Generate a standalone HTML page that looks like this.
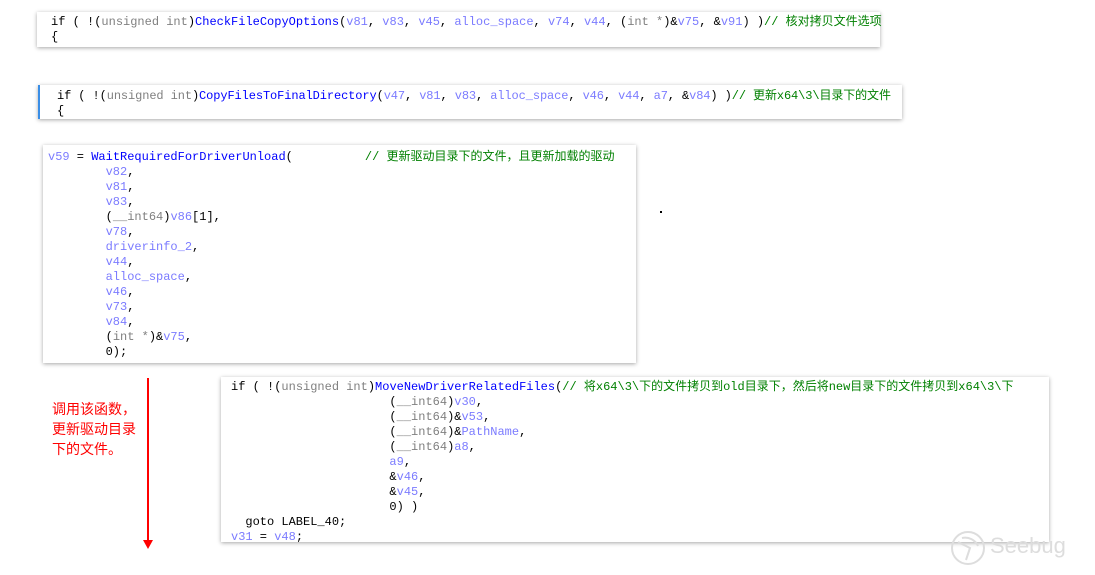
<!DOCTYPE html>
<html><head><meta charset="utf-8"><style>
body{margin:0;width:1095px;height:575px;background:#fff;position:relative;overflow:hidden;font-family:"Liberation Mono","Noto Sans CJK SC",monospace;font-size:12px;}
.box{position:absolute;background:#fff;box-shadow:0 1px 4px rgba(0,0,0,.35);}
.l{position:absolute;white-space:pre;line-height:15px;color:#000;}
.k{color:#000080}.g{color:#808080}.f{color:#0000ff}.v{color:#7b7bff}.c{color:#008000}.b{color:#000}
</style></head><body>
<div class="box" style="left:37px;top:12px;width:843px;height:35px">
<div class="l" style="left:14px;top:3px"><span class="b">if ( !(</span><span class="g">unsigned int</span><span class="b">)</span><span class="f">CheckFileCopyOptions</span><span class="b">(</span><span class="v">v81</span>, <span class="v">v83</span>, <span class="v">v45</span>, <span class="v">alloc_space</span>, <span class="v">v74</span>, <span class="v">v44</span>, (<span class="g">int *</span>)&amp;<span class="v">v75</span>, &amp;<span class="v">v91</span>) )<span class="c">// 核对拷贝文件选项</span></div>
<div class="l" style="left:14px;top:18px;color:#000">{</div>
</div>
<div class="box" style="left:38px;top:85px;width:862px;height:34px;border-left:2px solid #3a8ee6">
<div class="l" style="left:17px;top:4px;letter-spacing:-0.1px"><span class="b">if ( !(</span><span class="g">unsigned int</span><span class="b">)</span><span class="f">CopyFilesToFinalDirectory</span><span class="b">(</span><span class="v">v47</span>, <span class="v">v81</span>, <span class="v">v83</span>, <span class="v">alloc_space</span>, <span class="v">v46</span>, <span class="v">v44</span>, <span class="v">a7</span>, &amp;<span class="v">v84</span>) )<span class="c">// 更新x64\3\目录下的文件</span></div>
<div class="l" style="left:17px;top:19px;color:#000">{</div>
</div>
<div class="box" style="left:43px;top:145px;width:593px;height:218px">
<div class="l" style="left:5px;top:5px"><span class="v">v59</span> = <span class="f">WaitRequiredForDriverUnload</span>(          <span class="c">// 更新驱动目录下的文件，且更新加载的驱动</span>
<span class="v">        v82</span>,
<span class="v">        v81</span>,
<span class="v">        v83</span>,
        (<span class="g">__int64</span>)<span class="v">v86</span>[1],
<span class="v">        v78</span>,
<span class="v">        driverinfo_2</span>,
<span class="v">        v44</span>,
<span class="v">        alloc_space</span>,
<span class="v">        v46</span>,
<span class="v">        v73</span>,
<span class="v">        v84</span>,
        (<span class="g">int *</span>)&amp;<span class="v">v75</span>,
        0);</div>
</div>
<div class="box" style="left:221px;top:377px;width:828px;height:165px">
<div class="l" style="left:10px;top:3px"><span class="b">if ( !(</span><span class="g">unsigned int</span><span class="b">)</span><span class="f">MoveNewDriverRelatedFiles</span>(<span class="c">// 将x64\3\下的文件拷贝到old目录下，然后将new目录下的文件拷贝到x64\3\下</span>
                      (<span class="g">__int64</span>)<span class="v">v30</span>,
                      (<span class="g">__int64</span>)&amp;<span class="v">v53</span>,
                      (<span class="g">__int64</span>)&amp;<span class="v">PathName</span>,
                      (<span class="g">__int64</span>)<span class="v">a8</span>,
<span class="v">                      a9</span>,
                      &amp;<span class="v">v46</span>,
                      &amp;<span class="v">v45</span>,
                      0) )
<span class="b">  goto LABEL_40;</span>
<span class="v">v31</span> = <span class="v">v48</span>;</div>
</div>
<div style="position:absolute;left:147px;top:378px;width:2px;height:165px;background:#f00"></div>
<div style="position:absolute;left:143px;top:540px;width:0;height:0;border-left:5px solid transparent;border-right:5px solid transparent;border-top:9px solid #f00"></div>
<div style="position:absolute;left:52px;top:399px;color:#f00;font-family:'Liberation Sans','Noto Sans CJK SC',sans-serif;font-size:14px;line-height:20px">调用该函数，<br>更新驱动目录<br>下的文件。</div>
<div style="position:absolute;left:660px;top:211px;width:2px;height:2px;background:#000"></div>
<svg style="position:absolute;left:948px;top:528px" width="40" height="40"><circle cx="20" cy="20" r="16" fill="none" stroke="#ddd" stroke-width="2"/><path d="M10 14 L22 20 L18 32 M14 10 A14 14 0 0 1 30 18" fill="none" stroke="#ddd" stroke-width="2"/></svg>
<div style="position:absolute;left:990px;top:533px;color:#ddd;font-family:'Liberation Sans',sans-serif;font-size:22px">Seebug</div>
</body></html>
